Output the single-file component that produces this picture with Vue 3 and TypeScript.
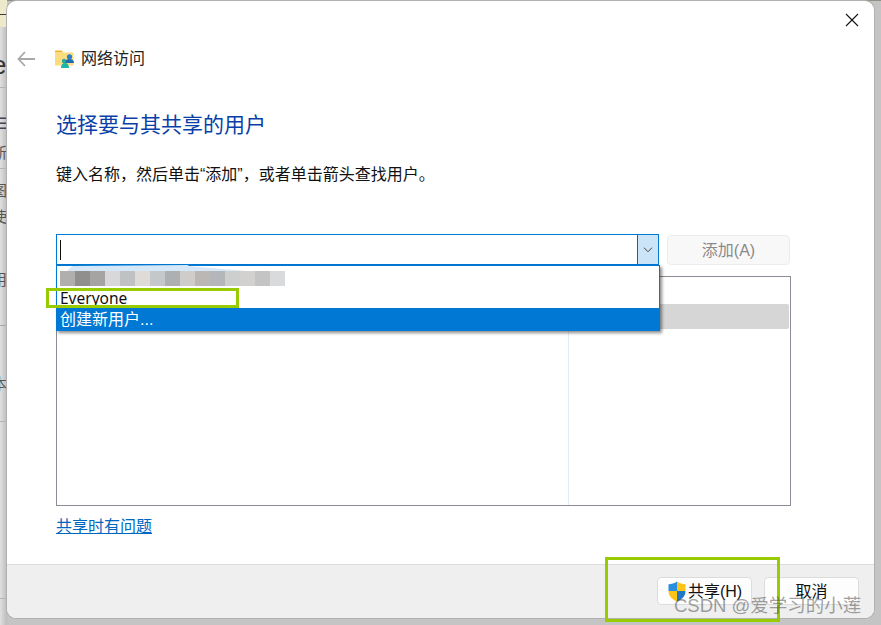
<script setup lang="ts">
const blur: string[] = ['#b0afae','#918f8d','#a5a4a3','#d8d8da','#c0c1c3','#dfdcd8','#c5c8cb','#aeafb1','#cfcdcb','#bab7b4','#b5b6b9','#cdcfce','#d2d1d0','#c3c4c3','#d9dadb']
</script>

<template>
  <div class="desk">
    <div class="bg-frag"><span class="f1">e</span><span class="f2">☰</span><span class="f3">新</span><span class="f4">图</span><span class="f5">使</span><span class="f6">用</span><span class="f7">本</span></div>
    <main class="win">
      <div class="close-row">
        <svg width="14" height="14" viewBox="0 0 14 14"><path d="M1 1l12 12M13 1L1 13" stroke="#111" stroke-width="1.1" fill="none"/></svg>
      </div>
      <div class="nav">
        <svg class="back" width="18" height="16" viewBox="0 0 18 16"><path d="M8 1L1.500 8L8 15M2 8H18" stroke="#a8a8a8" stroke-width="1.800" fill="none"/></svg>
        <svg class="folder" width="20" height="20" viewBox="0 0 20 20">
          <path d="M0 2.500A1 1 0 0 1 1 1.500H6.500L8.500 3.500H0Z" fill="#f0b429"/>
          <rect x="0" y="3.500" width="18.500" height="13" rx="1" fill="#fbdc7f"/>
          <circle cx="14.500" cy="7.800" r="2.600" fill="#2a7fc9"/>
          <path d="M9.500 14c0-2.800 2.200-4 5-4s4.500 1.200 4.500 4z" fill="#1f6cb5"/>
          <circle cx="9" cy="12" r="2.200" fill="#2aa79b"/>
          <path d="M6 19c0-3 1.300-5 4-5s4 2 4 5z" fill="#1fb6a6"/>
        </svg>
        <span class="nav-title">网络访问</span>
      </div>
      <h1 class="heading">选择要与其共享的用户</h1>
      <p class="hint">键入名称，然后单击“添加”，或者单击箭头查找用户。</p>
      <div class="entry-row">
        <div class="combo">
          <div class="field"><i class="caret"></i></div>
          <div class="arrow">
            <svg width="10" height="6" viewBox="0 0 10 6"><path d="M1 .7L5 4.700L9 .7" stroke="#444" stroke-width="1" fill="none"/></svg>
          </div>
        </div>
        <button class="add" disabled>添加(A)</button>
      </div>
      <div class="table">
        <div class="sel-row"></div>
        <div class="col-line"></div>
      </div>
      <a class="link">共享时有问题</a>
      <footer class="foot">
        <button class="btn share">
          <svg width="20" height="21" viewBox="0 0 20 21">
            <path d="M10 .5C7.500 2.300 4.500 3.200 1.500 3.200V10H10z" fill="#2a8fe0"/>
            <path d="M10 .5c2.500 1.800 5.500 2.700 8.500 2.700V10H10z" fill="#fcc419"/>
            <path d="M10 10H1.500c0 5 3.500 8.500 8.500 10.500z" fill="#fcc419"/>
            <path d="M10 10h8.500c0 5-3.500 8.500-8.500 10.500z" fill="#1f78c8"/>
          </svg>
          <span class="btn-text">共享(H)</span>
        </button>
        <button class="btn"><span class="btn-text">取消</span></button>
      </footer>
    </main>

    <div class="drop">
      <div class="opt blurred">
        <b class="sliver"></b>
        <i v-for="(c, n) in blur" :key="n" :style="{ background: c }"></i>
      </div>
      <div class="opt everyone">Everyone</div>
      <div class="opt active">创建新用户...</div>
    </div>
    <div class="mark m1"></div>
    <div class="mark m2"></div>
    <div class="wm">CSDN @爱学习的小莲</div>
  </div>
</template>

<style>
body { margin: 0; background: #c9c9c9; }
</style>

<style scoped>
.desk {
  position: relative; width: 881px; height: 625px; overflow: hidden;
  background:
    linear-gradient(#8f8f86 0 1px, transparent 1px),
    linear-gradient(#c4c4c4, #c4c4c4);
  font-family: "Liberation Sans", "Noto Sans CJK SC", sans-serif;
  color: #111;
}
.bg-frag {
  position: absolute; left: 0; top: 0; width: 7px; height: 625px; overflow: hidden; color: #555;
  background:
    linear-gradient(#3a3a36 0 1px, transparent 1px) 0 14px / 100% 1px no-repeat,
    linear-gradient(#eceacb, #eceacb) 0 0 / 100% 27px no-repeat,
    linear-gradient(#b5b5b5, #b5b5b5) 0 87px / 100% 1px no-repeat,
    linear-gradient(#b5b5b5, #b5b5b5) 0 168px / 100% 1px no-repeat,
    linear-gradient(#a8a8a8, #a8a8a8) 0 325px / 100% 1px no-repeat,
    linear-gradient(#b5b5b5, #b5b5b5) 0 421px / 100% 1px no-repeat,
    linear-gradient(#b5b5b5, #b5b5b5) 0 598px / 100% 1px no-repeat,
    linear-gradient(90deg, #e0e0e0, #bcbcbc);
}
.bg-frag span { position: absolute; left: -8px; font-size: 15px; line-height: 16px; }
.bg-frag .f1 { left: -8px; top: 51px; font: 26px/28px "Liberation Sans", sans-serif; color: #333; }
.bg-frag .f2 { left: -3px; top: 116px; font-size: 16px; color: #445; }
.bg-frag .f3 { top: 145px; }
.bg-frag .f4 { top: 183px; }
.bg-frag .f5 { top: 209px; }
.bg-frag .f6 { top: 272px; }
.bg-frag .f7 { top: 376px; }

.win {
  position: absolute; left: 7px; top: 1px; width: 867px; height: 617px;
  box-sizing: border-box; display: flex; flex-direction: column;
  background: #fff; border-radius: 9px; overflow: hidden;
  box-shadow: 0 0 0 1px #b0b0b0;
}
.close-row { height: 38px; flex: none; display: flex; justify-content: flex-end; padding: 12px 15px 0 0; box-sizing: border-box; }
.nav { display: flex; align-items: center; height: 22px; margin-top: 9px; padding-left: 10px; flex: none; }
.back { margin-right: 20px; }
.folder { margin-right: 6px; }
.nav-title { font-size: 16px; line-height: 20px; color: #222; }
.heading { margin: 41px 0 0 49px; font-size: 21px; line-height: 28px; font-weight: 400; color: #0a3fa8; }
.hint { margin: 26px 0 0 49px; font-size: 16px; line-height: 20px; color: #111; }
.entry-row { display: flex; margin: 49px 0 0 49px; gap: 8px; flex: none; }
.combo { width: 603px; height: 31px; box-sizing: border-box; border: 1px solid #0078d4; display: flex; background: #fff; }
.field { flex: 1; display: flex; align-items: center; padding-left: 3px; }
.caret { width: 1px; height: 20px; background: #111; display: block; }
.arrow { width: 20px; background: #cce4f7; border-left: 1px solid #0b63b0; display: flex; align-items: center; justify-content: center; }
.add {
  width: 123px; height: 30px; margin-top: 1px; box-sizing: border-box; border: 1px solid #ececec; border-radius: 4px;
  background: #f8f8f8; color: #8a8a8a; font: 16px/20px "Liberation Sans", "Noto Sans CJK SC", sans-serif; padding: 1px 0 0;
}
.table {
  position: relative; margin: 11px 0 0 49px; width: 735px; height: 230px; box-sizing: border-box;
  border: 1px solid #8b8d96; background: #fff; flex: none;
}
.sel-row { position: absolute; left: 2px; right: 1px; top: 27px; height: 25px; background: #d6d6d6; border-radius: 2px; }
.col-line { position: absolute; left: 511px; top: 52px; bottom: 0; width: 1px; background: #e2edf8; }
.link { margin: 11px 0 0 49px; font-size: 16px; line-height: 20px; color: #0067c0; text-decoration: underline; align-self: flex-start; }
.foot {
  margin-top: auto; height: 54px; flex: none; box-sizing: border-box; border-top: 1px solid #dcdcdc;
  background: #efefef; display: flex; justify-content: flex-end; align-items: flex-start; gap: 12px; padding: 12px 15px 0 0;
}
.btn {
  width: 95px; height: 28px; box-sizing: border-box; border: 1px solid #dcdcdc; border-radius: 4px; background: #fdfdfd;
  font: 16px/20px "Liberation Sans", "Noto Sans CJK SC", sans-serif; color: #111; padding: 0;
  display: flex; align-items: center; justify-content: center;
}
.btn-text { padding-top: 2px; }
.share svg { margin-right: 1px; }

.drop {
  position: absolute; left: 56px; top: 265px; width: 604px; height: 66px; box-sizing: border-box;
  border: 1px solid #0078d4; border-bottom: 0; background: #fff; box-shadow: 2px 2px 3px rgba(0,0,0,.45);
  display: flex; flex-direction: column;
}
.opt { height: 21px; flex: none; padding-left: 3px; font-size: 16px; line-height: 21px; color: #111; }
.everyone { font-family: "Noto Sans", sans-serif; font-size: 15.500px; line-height: 23px; }
.opt.active { height: 23px; margin: 0 -1px; background: #0078d4; color: #fff; padding-left: 4px; line-height: 24px; }
.blurred { position: relative; display: flex; padding: 5px 0 0 3px; box-sizing: border-box; height: 21px; align-items: flex-start; }
.blurred i { width: 15px; height: 15px; display: block; position: relative; }
.sliver { position: absolute; left: 10px; top: -1px; width: 180px; height: 6px; background: #d6e7f7; clip-path: polygon(0 100%, 3% 15%, 67% 0, 68% 20%, 100% 100%); display: block; }
.mark { position: absolute; border: 3px solid #99cc00; box-sizing: border-box; pointer-events: none; }
.m1 { left: 46px; top: 288px; width: 193px; height: 20px; }
.m2 { left: 605px; top: 557px; width: 175px; height: 65px; }
.wm { position: absolute; left: 674px; top: 595px; font-size: 18.500px; line-height: 22px; color: rgba(70,70,70,.5); white-space: nowrap; }
</style>
